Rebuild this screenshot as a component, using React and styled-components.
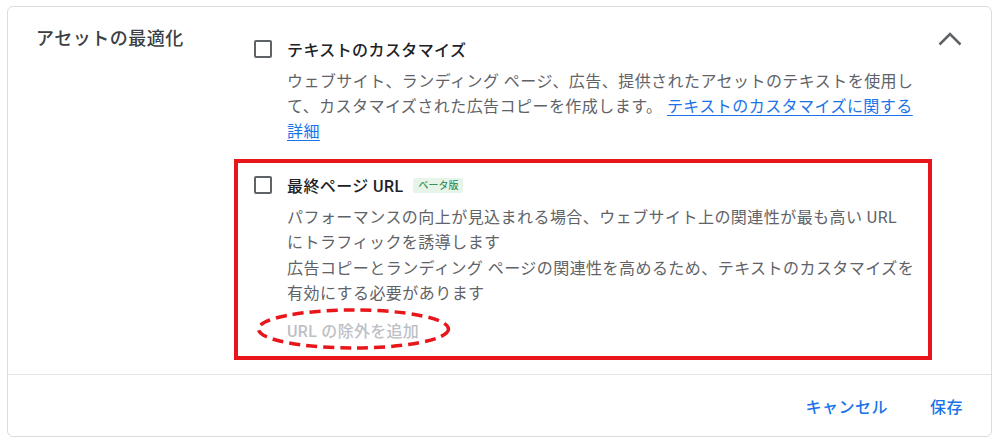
import React from "react";
import styled, { createGlobalStyle } from "styled-components";

const Global = createGlobalStyle`
  html, body { margin: 0; padding: 0; background: #ffffff; }
  body {
    font-family: Roboto, "Noto Sans CJK JP", "Noto Sans", sans-serif;
    color: #3c4043;
  }
  * { box-sizing: border-box; }
`;

const Card = styled.section`
  margin: 6px 0 0 7px;
  width: 985px;
  height: 431px;
  border: 1px solid #dadce0;
  border-radius: 6px;
  display: flex;
  flex-direction: column;
  background: #fff;
`;

const Main = styled.div`
  display: flex;
  align-items: flex-start;
  padding: 16px 0 14px 28px;
  border-bottom: 1px solid #e3e3e3;
`;

const Heading = styled.h2`
  width: 198px;
  flex: none;
  margin: 0;
  font-size: 18px;
  line-height: 32px;
  font-weight: 500;
  letter-spacing: 0.5px;
  color: #3c4043;
`;

const Options = styled.div`
  width: 698px;
  flex: none;
  display: flex;
  flex-direction: column;
`;

const Option = styled.div`
  border: 4px solid ${(p) => (p.$highlighted ? "#e8161b" : "transparent")};
  padding: 10px 10px ${(p) => (p.$highlighted ? "12px" : "10px")} 16px;
  display: grid;
  grid-template-columns: 18px 1fr;
  column-gap: 15px;
`;

const Checkbox = styled.span`
  width: 18px;
  height: 18px;
  border: 2px solid #5f6368;
  border-radius: 2px;
  align-self: center;
`;

const TitleRow = styled.div`
  display: flex;
  align-items: center;
  height: 24px;
  gap: 10px;
`;

const Title = styled.span`
  font-size: 16px;
  font-weight: 500;
  letter-spacing: 0.4px;
  color: #202124;
`;

const Badge = styled.span`
  background: #e6f4ea;
  color: #188038;
  font-size: 10px;
  line-height: 11px;
  padding: 2px 5px;
  border-radius: 2px;
  letter-spacing: 0;
`;

const Body = styled.div`
  grid-column: 2;
  margin-top: 8px;
`;

const Para = styled.p`
  margin: 0 0 1px;
  font-size: 16px;
  line-height: 25px;
  letter-spacing: 0.45px;
  color: #5f6368;
`;

const Link = styled.a`
  color: #1a73e8;
  text-decoration: underline;
  text-underline-offset: 3px;
  cursor: pointer;
`;

const AddExclusion = styled.div`
  position: relative;
  display: inline-block;
  margin-top: 12px;
  font-size: 16px;
  line-height: 25px;
  font-weight: 500;
  letter-spacing: 0.3px;
  color: #bdc1c6;
`;

const Ellipse = styled.svg`
  position: absolute;
  left: -31px;
  top: -11px;
  width: 195px;
  height: 42px;
  overflow: visible;
  pointer-events: none;
`;

const ChevronButton = styled.button`
  margin: 9px 0 0 6px;
  width: 24px;
  height: 14px;
  padding: 0;
  border: none;
  background: none;
  display: flex;
  align-items: center;
  justify-content: center;
`;

const Footer = styled.div`
  flex: 1;
  display: flex;
  align-items: center;
  justify-content: flex-end;
  gap: 26px;
  padding: 0 20px 0 0;
`;

const TextButton = styled.button`
  border: none;
  background: none;
  padding: 6px 8px;
  font-family: inherit;
  font-size: 16px;
  font-weight: 500;
  letter-spacing: 0.5px;
  color: #1a73e8;
  cursor: pointer;
`;

export default function App() {
  return (
    <>
      <Global />
      <Card>
        <Main>
          <Heading>アセットの最適化</Heading>
          <Options>
            <Option>
              <Checkbox />
              <TitleRow>
                <Title>テキストのカスタマイズ</Title>
              </TitleRow>
              <Body>
                <Para>
                  ウェブサイト、ランディング ページ、広告、提供されたアセットのテキストを使用して、カスタマイズされた広告コピーを作成します。{" "}
                  <Link>テキストのカスタマイズに関する詳細</Link>
                </Para>
              </Body>
            </Option>
            <Option $highlighted>
              <Checkbox />
              <TitleRow>
                <Title>最終ページ URL</Title>
                <Badge>ベータ版</Badge>
              </TitleRow>
              <Body>
                <Para>
                  パフォーマンスの向上が見込まれる場合、ウェブサイト上の関連性が最も高い URL
                  <br />
                  にトラフィックを誘導します
                </Para>
                <Para>
                  広告コピーとランディング ページの関連性を高めるため、テキストのカスタマイズを有効にする必要があります
                </Para>
                <AddExclusion>
                  URL の除外を追加
                  <Ellipse viewBox="0 0 195 42">
                    <ellipse
                      cx="97.5"
                      cy="21"
                      rx="95"
                      ry="19"
                      fill="none"
                      stroke="#e8161b"
                      strokeWidth="3.5"
                      strokeDasharray="11 6"
                    />
                  </Ellipse>
                </AddExclusion>
              </Body>
            </Option>
          </Options>
          <ChevronButton aria-label="閉じる">
            <svg width="24" height="14" viewBox="0 0 24 14">
              <polyline
                points="1.5,12.5 12,2 22.5,12.5"
                fill="none"
                stroke="#5f6368"
                strokeWidth="2.6"
              />
            </svg>
          </ChevronButton>
        </Main>
        <Footer>
          <TextButton>キャンセル</TextButton>
          <TextButton>保存</TextButton>
        </Footer>
      </Card>
    </>
  );
}
